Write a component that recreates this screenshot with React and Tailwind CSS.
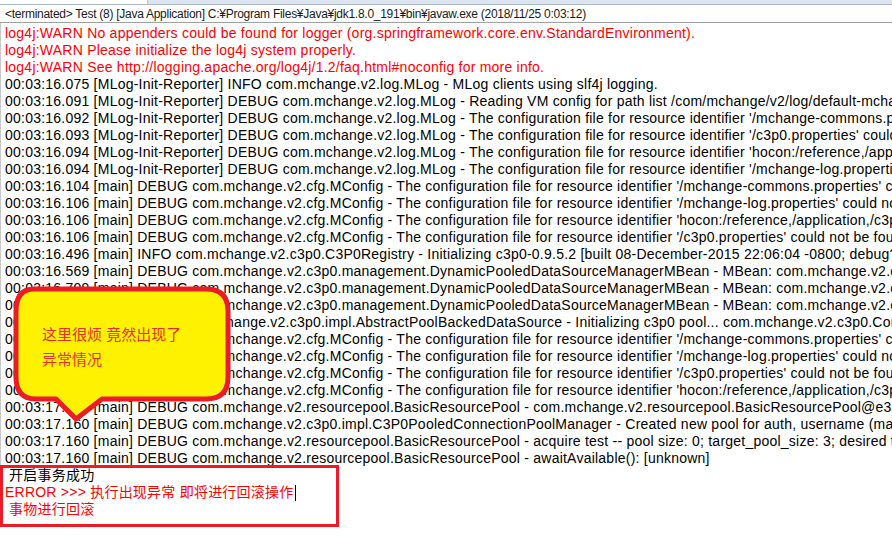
import React from "react";

const warnLines = [
  "log4j:WARN No appenders could be found for logger (org.springframework.core.env.StandardEnvironment).",
  "log4j:WARN Please initialize the log4j system properly.",
  "log4j:WARN See http://logging.apache.org/log4j/1.2/faq.html#noconfig for more info.",
];

const cfgMiss = (ts, thread, cls, id) =>
  `${ts} [${thread}] DEBUG ${cls} - The configuration file for resource identifier '${id}' could not be found. Skipping.`;

const logLines = [
  "00:03:16.075 [MLog-Init-Reporter] INFO com.mchange.v2.log.MLog - MLog clients using slf4j logging.",
  "00:03:16.091 [MLog-Init-Reporter] DEBUG com.mchange.v2.log.MLog - Reading VM config for path list /com/mchange/v2/log/default-mchange-log.properties, /mchange-commons.properties",
  cfgMiss("00:03:16.092", "MLog-Init-Reporter", "com.mchange.v2.log.MLog", "/mchange-commons.properties"),
  cfgMiss("00:03:16.093", "MLog-Init-Reporter", "com.mchange.v2.log.MLog", "/c3p0.properties"),
  cfgMiss("00:03:16.094", "MLog-Init-Reporter", "com.mchange.v2.log.MLog", "hocon:/reference,/application,/c3p0,/"),
  cfgMiss("00:03:16.094", "MLog-Init-Reporter", "com.mchange.v2.log.MLog", "/mchange-log.properties"),
  cfgMiss("00:03:16.104", "main", "com.mchange.v2.cfg.MConfig", "/mchange-commons.properties"),
  cfgMiss("00:03:16.106", "main", "com.mchange.v2.cfg.MConfig", "/mchange-log.properties"),
  cfgMiss("00:03:16.106", "main", "com.mchange.v2.cfg.MConfig", "hocon:/reference,/application,/c3p0,/"),
  cfgMiss("00:03:16.106", "main", "com.mchange.v2.cfg.MConfig", "/c3p0.properties"),
  "00:03:16.496 [main] INFO com.mchange.v2.c3p0.C3P0Registry - Initializing c3p0-0.9.5.2 [built 08-December-2015 22:06:04 -0800; debug? true; trace: 10]",
  "00:03:16.569 [main] DEBUG com.mchange.v2.c3p0.management.DynamicPooledDataSourceManagerMBean - MBean: com.mchange.v2.c3p0:type=PooledDataSource registered.",
  "00:03:16.709 [main] DEBUG com.mchange.v2.c3p0.management.DynamicPooledDataSourceManagerMBean - MBean: com.mchange.v2.c3p0:type=PooledDataSource registered.",
  "00:03:16.712 [main] DEBUG com.mchange.v2.c3p0.management.DynamicPooledDataSourceManagerMBean - MBean: com.mchange.v2.c3p0:type=PooledDataSource registered.",
  "00:03:16.825 [main] INFO com.mchange.v2.c3p0.impl.AbstractPoolBackedDataSource - Initializing c3p0 pool... com.mchange.v2.c3p0.ComboPooledDataSource",
  cfgMiss("00:03:16.829", "main", "com.mchange.v2.cfg.MConfig", "/mchange-commons.properties"),
  cfgMiss("00:03:16.829", "main", "com.mchange.v2.cfg.MConfig", "/mchange-log.properties"),
  cfgMiss("00:03:16.829", "main", "com.mchange.v2.cfg.MConfig", "/c3p0.properties"),
  cfgMiss("00:03:16.829", "main", "com.mchange.v2.cfg.MConfig", "hocon:/reference,/application,/c3p0,/"),
  "00:03:17.150 [main] DEBUG com.mchange.v2.resourcepool.BasicResourcePool - com.mchange.v2.resourcepool.BasicResourcePool@e39916 config: [start -> 3; min -> 3]",
  "00:03:17.160 [main] DEBUG com.mchange.v2.c3p0.impl.C3P0PooledConnectionPoolManager - Created new pool for auth, username (masked): 'ro******', password (masked)",
  "00:03:17.160 [main] DEBUG com.mchange.v2.resourcepool.BasicResourcePool - acquire test -- pool size: 0; target_pool_size: 3; desired target? 1",
  "00:03:17.160 [main] DEBUG com.mchange.v2.resourcepool.BasicResourcePool - awaitAvailable(): [unknown]",
];

const font = { fontFamily: '"Liberation Sans", "Noto Sans CJK JP", sans-serif' };

export default function App() {
  return (
    <div className="relative h-[557px] w-[892px] overflow-hidden bg-white" style={font}>
      {/* tab strip */}
      <div className="flex h-[5px] border-b border-[#aab8cc]">
        <div className="w-[147px] bg-white" />
        <div className="flex-1 border-l border-[#b9c5d6] bg-[#dbe4ef]" />
      </div>

      {/* console header */}
      <div className="flex h-[18px] items-center border-b border-[#a0a0a0] pl-[5px] text-[12px] tracking-[-0.27px] text-[#1a1a1a]">
        {"<terminated> Test (8) [Java Application] C:¥Program Files¥Java¥jdk1.8.0_191¥bin¥javaw.exe (2018/11/25 0:03:12)"}
      </div>

      {/* console body */}
      <div className="border-l border-[#c8c8c8] pt-[2px] text-[14px] leading-[17px] tracking-[0.23px]">
        {warnLines.map((l, i) => (
          <div key={"w" + i} className="whitespace-pre pl-[4px] text-[#ff0000]">
            {l}
          </div>
        ))}
        {logLines.map((l, i) => (
          <div key={"l" + i} className="whitespace-pre pl-[4px] text-black">
            {l}
          </div>
        ))}

        <div className="relative">
          <div className="whitespace-pre pl-[8px] text-black">开启事务成功</div>
          <div className="flex items-center whitespace-pre pl-[4px] text-[#ff0000]">
            ERROR {">>>"} 执行出现异常 即将进行回滚操作
            <span className="ml-px inline-block h-[16px] w-px bg-black" />
          </div>
          <div className="whitespace-pre pl-[8px] text-[#ff0000]">事物进行回滚</div>
          <div className="pointer-events-none absolute left-[-1px] top-[-2px] h-[62px] w-[339px] border-[3px] border-[#ed1c24]" />
        </div>
      </div>

      {/* callout annotation */}
      <svg className="absolute left-[10px] top-[285px]" width="226" height="140" viewBox="0 0 226 140">
        <path
          d="M24 4 H196 Q218 4 218 26 V92 Q218 114 196 114 H92 L66 134 L46 114 H26 Q6 114 6 92 V26 Q6 4 24 4 Z"
          fill="#fff200"
          stroke="#ed1c24"
          strokeWidth="5"
          strokeLinejoin="round"
        />
      </svg>
      <div className="absolute left-[42px] top-[322px] text-[15px] leading-[25px] text-[#e8302a]">
        <div>这里很烦 竟然出现了</div>
        <div>异常情况</div>
      </div>
    </div>
  );
}
